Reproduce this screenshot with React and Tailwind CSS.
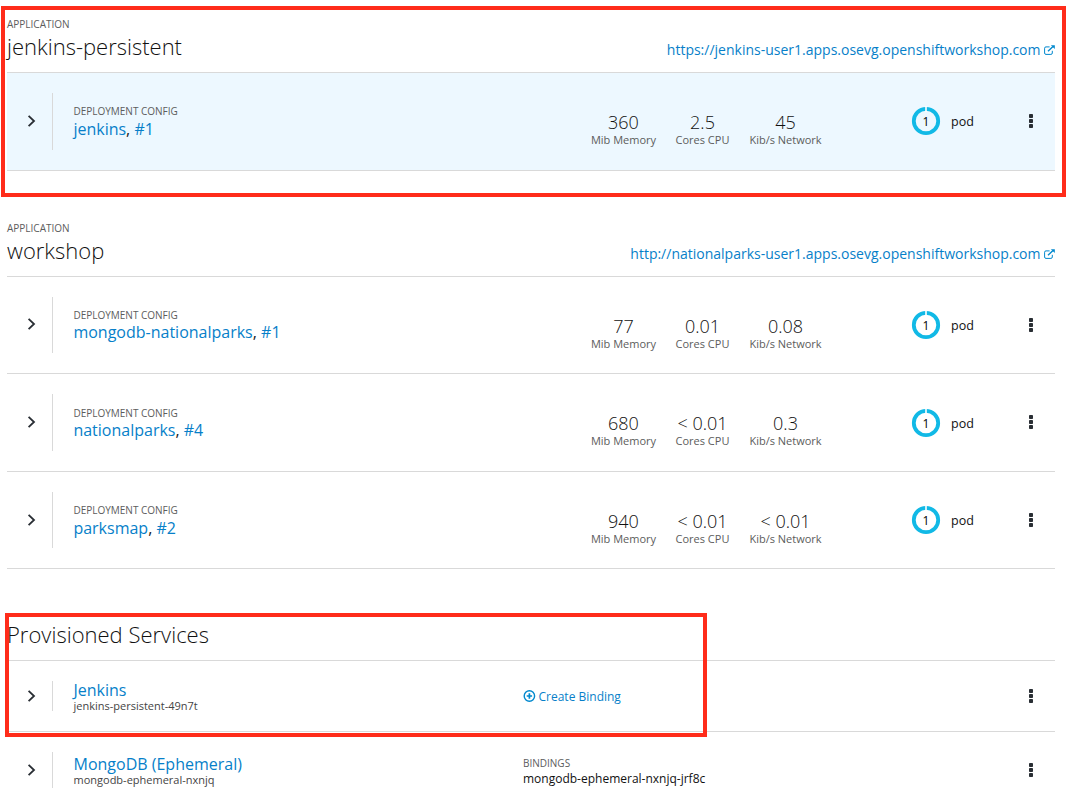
import React from "react";

const LINK = "text-[#077fc9]";

function Chevron() {
  return (
    <svg width="10" height="12" viewBox="0 0 10 12" fill="none" stroke="#292e34" strokeWidth="1.8">
      <path d="M1.6 0.9 L7 6 L1.6 11.1" />
    </svg>
  );
}

function Kebab() {
  return (
    <svg width="6" height="16" viewBox="0 0 6 16" fill="#292e34">
      <rect x="1" y="1" width="4" height="4" rx="0.8" />
      <rect x="1" y="6" width="4" height="4" rx="0.8" />
      <rect x="1" y="11" width="4" height="4" rx="0.8" />
    </svg>
  );
}

function ExternalLink() {
  return (
    <svg width="11" height="10" viewBox="0 0 11 10" fill="none" stroke="#0088ce">
      <path d="M5.6 1.9 H2 Q0.6 1.9 0.6 3.2 V8 Q0.6 9.4 2 9.4 H6.9 Q8.3 9.4 8.3 8 V5.8" strokeWidth="1" />
      <path d="M4 6.3 L9 1.6" strokeWidth="1.4" />
      <path d="M6.8 0.2 H10.8 V4.1 Z" fill="#0088ce" stroke="none" />
    </svg>
  );
}

function AddCircle() {
  return (
    <svg width="13" height="12" viewBox="0 0 13 12" fill="none" stroke="#0088ce">
      <circle cx="6.4" cy="6" r="5.2" strokeWidth="1.4" />
      <path d="M6.4 3.3 V8.7 M3.7 6 H9.1" strokeWidth="1.7" />
    </svg>
  );
}

function PodDonut() {
  return (
    <svg width="30" height="30" viewBox="0 0 30 30">
      <circle cx="15" cy="15" r="12.2" fill="none" stroke="#11b9e6" strokeWidth="3.8" />
      <path d="M15 0 V6" stroke="white" strokeWidth="1.6" />
      <text x="15" y="19.5" textAnchor="middle" fontSize="12" fill="#030303">1</text>
    </svg>
  );
}

function AppHeader({ name, url }) {
  return (
    <header className="flex h-[60px] items-start justify-between border-b border-[#d9d9d9]">
      <div>
        <div className="mt-[4px] text-[10px] leading-[14px] text-[#5c5c5c]">APPLICATION</div>
        <h2 className="text-[22px] leading-[30px] font-light text-[#111]">{name}</h2>
      </div>
      <a className={`mt-[27px] flex items-center gap-[3.5px] text-[14px] leading-[20px] ${LINK}`}>
        {url}
        <ExternalLink />
      </a>
    </header>
  );
}

function Metric({ value, label }) {
  return (
    <div className="text-center">
      <div className="text-[18px] leading-[20px] font-light text-[#111]">{value}</div>
      <div className="text-[11px] leading-[15px] text-[#5c5c5c]">{label}</div>
    </div>
  );
}

function DeploymentRow({
  name,
  num,
  metrics,
  height,
  active,
  divider = "h-[57px] pb-[2px]",
  title = "mt-[31px]",
  link = "",
  pod = "mt-[33px]",
}) {
  return (
    <div className={`flex items-start border-b border-[#d9d9d9] ${height} ${active ? "bg-[#edf8ff]" : ""}`}>
      <div className={`mt-[20px] flex w-[46px] items-center border-r border-[#d9d9d9] pl-[20px] ${divider}`}>
        <Chevron />
      </div>
      <div className={`ml-[20.4px] w-[507.6px] ${title}`}>
        <div className="text-[10px] leading-[14px] text-[#5c5c5c]">DEPLOYMENT CONFIG</div>
        <div className={`text-[16px] leading-[22px] text-[#222] ${link}`}>
          <a className={LINK}>{name}</a>, <a className={LINK}>#{num}</a>
        </div>
      </div>
      <div className="mt-[39px] grid w-[251px] grid-cols-[85px_73px_93px]">
        <Metric value={metrics[0]} label="Mib Memory" />
        <Metric value={metrics[1]} label="Cores CPU" />
        <Metric value={metrics[2]} label="Kib/s Network" />
      </div>
      <div className={`ml-[79px] flex w-[117px] items-center gap-[10px] text-[12.5px] text-[#111] ${pod}`}>
        <PodDonut />
        <span className="pt-[2px]">pod</span>
      </div>
      <div className="mt-[40px]">
        <Kebab />
      </div>
    </div>
  );
}

function ServiceRow({ name, instance, className, divider, title, kebab, children }) {
  return (
    <div className={`flex items-start ${className}`}>
      <div className={`mt-[20px] w-[46px] border-r border-[#d9d9d9] pl-[20px] ${divider}`}>
        <Chevron />
      </div>
      <div className={`ml-[20.5px] w-[449.5px] ${title}`}>
        <div className={`text-[16px] leading-[20px] ${LINK}`}>{name}</div>
        <div className="text-[11px] leading-[12px] text-[#444]">{instance}</div>
      </div>
      <div className="w-[505px]">{children}</div>
      <div className={kebab}>
        <Kebab />
      </div>
    </div>
  );
}

export default function App() {
  return (
    <main className="relative h-[791px] w-[1070px] overflow-hidden bg-white pt-[13px] pr-[15px] pl-[7px] font-['Open_Sans',sans-serif]">
      <section>
        <AppHeader name="jenkins-persistent" url="https://jenkins-user1.apps.osevg.openshiftworkshop.com" />
        <DeploymentRow name="jenkins" num="1" metrics={["360", "2.5", "45"]} height="h-[98px]" active />
      </section>
      <section className="mt-[46px]">
        <AppHeader name="workshop" url="http://nationalparks-user1.apps.osevg.openshiftworkshop.com" />
        <DeploymentRow
          name="mongodb-nationalparks"
          num="1"
          metrics={["77", "0.01", "0.08"]}
          height="h-[97px]"
          divider="h-[56px] pb-[2px]"
          link="-mt-px"
        />
        <DeploymentRow
          name="nationalparks"
          num="4"
          metrics={["680", "< 0.01", "0.3"]}
          height="h-[98px]"
          title="mt-[32px]"
          link="-mt-px"
          pod="mt-[34px]"
        />
        <DeploymentRow name="parksmap" num="2" metrics={["940", "< 0.01", "< 0.01"]} height="h-[97px]" divider="h-[56px] pb-[1px]" />
      </section>
      <section className="mt-[50px]">
        <h2 className="h-[42px] border-b border-[#d9d9d9] text-[22px] leading-[30px] font-light text-[#111]">
          Provisioned Services
        </h2>
        <ServiceRow
          name="Jenkins"
          instance="jenkins-persistent-49n7t"
          className="h-[71px] border-b border-[#d9d9d9]"
          divider="h-[30px] pt-[9px]"
          title="mt-[19px]"
          kebab="mt-[27px]"
        >
          <a className={`mt-[25px] flex items-center gap-[2.5px] text-[12px] leading-[18px] ${LINK}`}>
            <AddCircle />
            <span className="pt-[2px]">Create Binding</span>
          </a>
        </ServiceRow>
        <ServiceRow
          name="MongoDB (Ephemeral)"
          instance="mongodb-ephemeral-nxnjq"
          className="h-[56px]"
          divider="h-[36px] pt-[12px]"
          title="mt-[22px]"
          kebab="mt-[30px]"
        >
          <div className="mt-[24px] text-[10px] leading-[14px] text-[#5c5c5c]">BINDINGS</div>
          <div className="text-[12px] leading-[17px] text-[#111]">mongodb-ephemeral-nxnjq-jrf8c</div>
        </ServiceRow>
      </section>
      <div className="absolute top-[6px] left-[1px] h-[191px] w-[1065px] border-4 border-[#ff2c1a]" />
      <div className="absolute top-[613px] left-[5px] h-[124px] w-[702px] border-4 border-[#ff2c1a]" />
    </main>
  );
}
